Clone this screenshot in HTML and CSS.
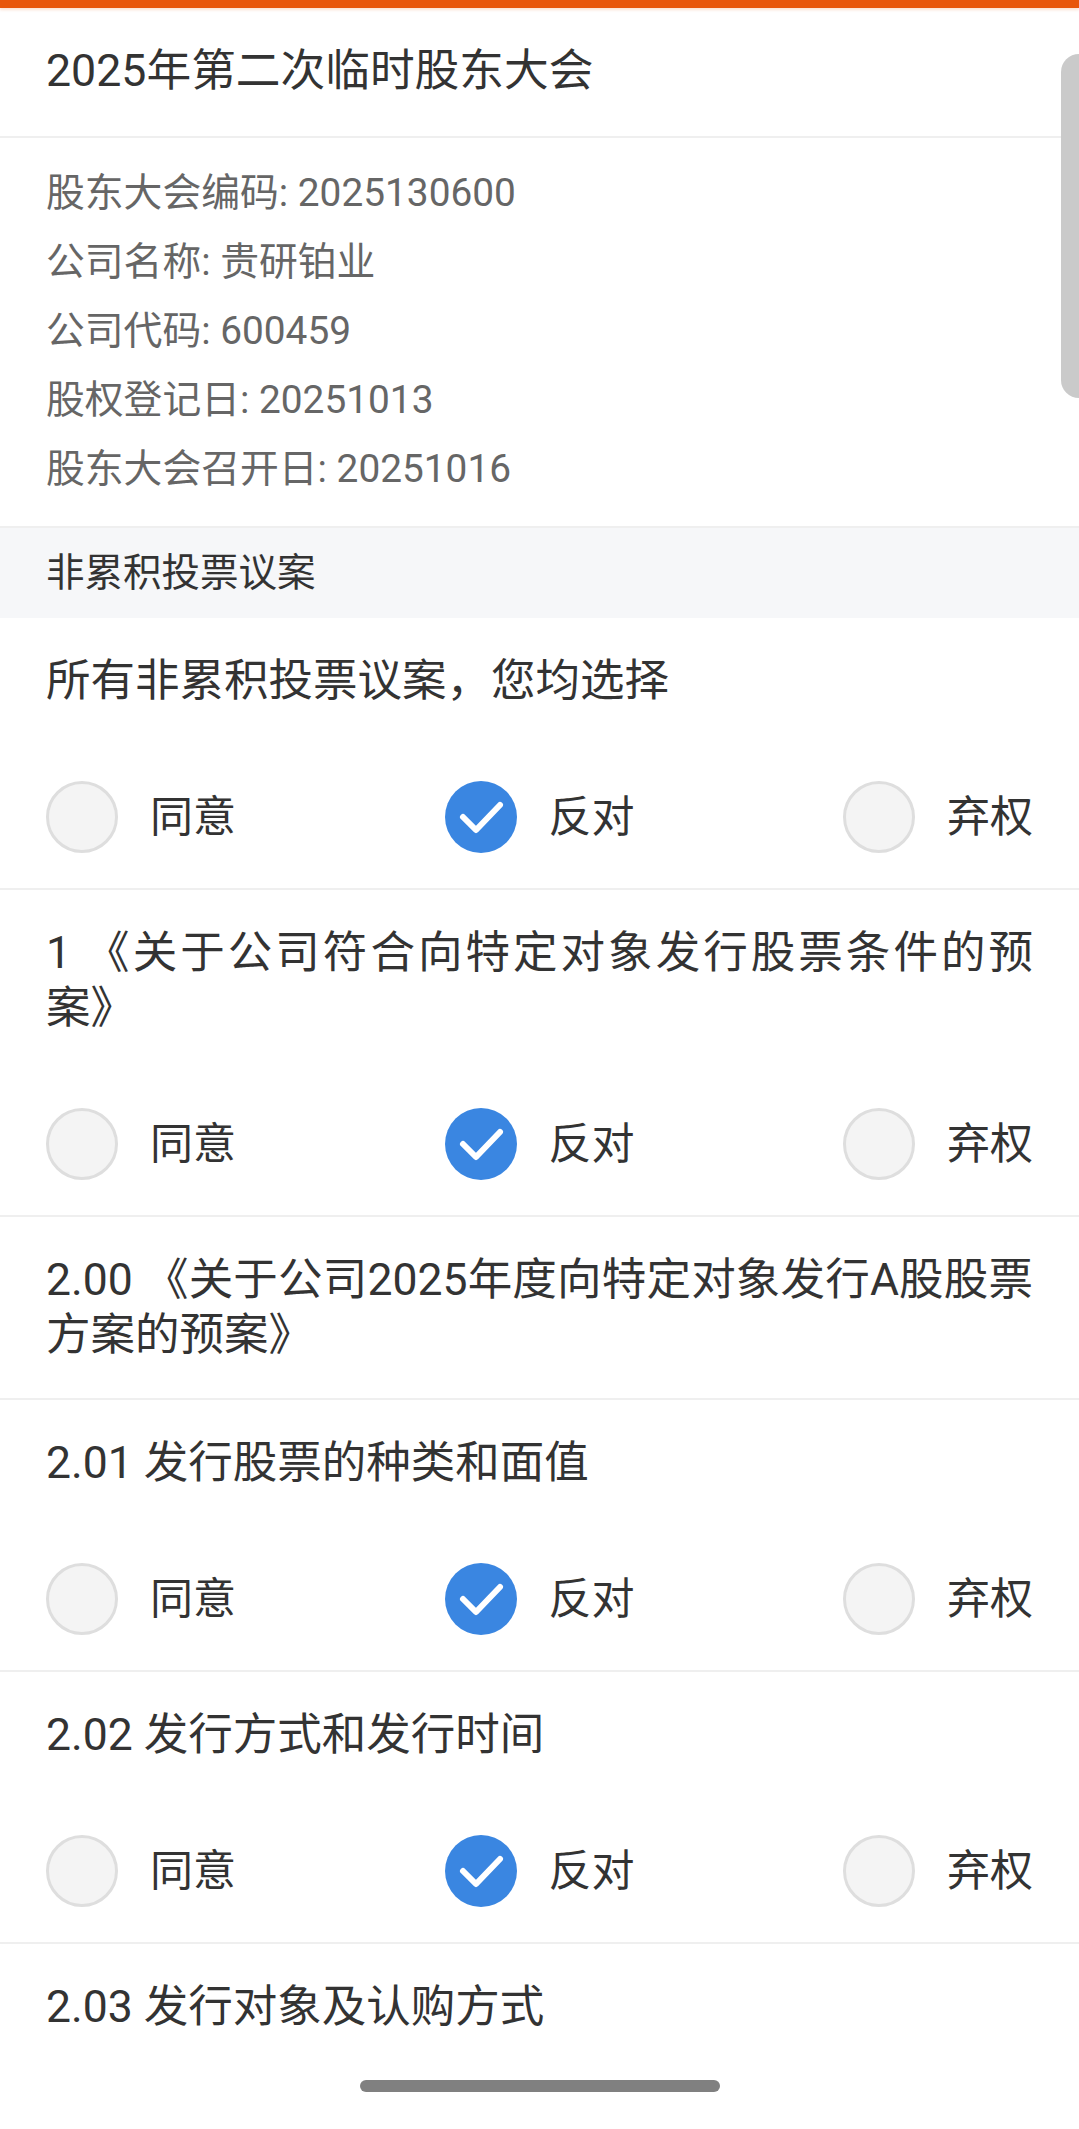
FILE: index.html
```html
<!DOCTYPE html>
<html lang="zh-CN">
<head>
<meta charset="utf-8">
<title>2025年第二次临时股东大会</title>
<link rel="stylesheet" href="styles.css">
</head>
<body>
<div class="topbar"></div>
<header class="title">2025年第二次临时股东大会</header>
<section class="info">
  <div class="info-line">股东大会编码: 2025130600</div>
  <div class="info-line">公司名称: 贵研铂业</div>
  <div class="info-line">公司代码: 600459</div>
  <div class="info-line">股权登记日: 20251013</div>
  <div class="info-line">股东大会召开日: 20251016</div>
</section>
<div class="section-head">非累积投票议案</div>

<div class="motion">
  <div class="q">所有非累积投票议案，您均选择</div>
  <div class="opts">
    <div class="opt"><span class="radio"></span><span class="opt-label">同意</span></div>
    <div class="opt"><span class="radio on"><svg viewBox="0 0 72 72"><path d="M18 36 L31 49 L55 24"/></svg></span><span class="opt-label">反对</span></div>
    <div class="opt"><span class="radio"></span><span class="opt-label">弃权</span></div>
  </div>
</div>

<div class="motion">
  <div class="q">1 《关于公司符合向特定对象发行股票条件的预案》</div>
  <div class="opts">
    <div class="opt"><span class="radio"></span><span class="opt-label">同意</span></div>
    <div class="opt"><span class="radio on"><svg viewBox="0 0 72 72"><path d="M18 36 L31 49 L55 24"/></svg></span><span class="opt-label">反对</span></div>
    <div class="opt"><span class="radio"></span><span class="opt-label">弃权</span></div>
  </div>
</div>

<div class="motion">
  <div class="q">2.00 《关于公司2025年度向特定对象发行A股股票方案的预案》</div>
</div>

<div class="motion">
  <div class="q">2.01 发行股票的种类和面值</div>
  <div class="opts">
    <div class="opt"><span class="radio"></span><span class="opt-label">同意</span></div>
    <div class="opt"><span class="radio on"><svg viewBox="0 0 72 72"><path d="M18 36 L31 49 L55 24"/></svg></span><span class="opt-label">反对</span></div>
    <div class="opt"><span class="radio"></span><span class="opt-label">弃权</span></div>
  </div>
</div>

<div class="motion">
  <div class="q">2.02 发行方式和发行时间</div>
  <div class="opts">
    <div class="opt"><span class="radio"></span><span class="opt-label">同意</span></div>
    <div class="opt"><span class="radio on"><svg viewBox="0 0 72 72"><path d="M18 36 L31 49 L55 24"/></svg></span><span class="opt-label">反对</span></div>
    <div class="opt"><span class="radio"></span><span class="opt-label">弃权</span></div>
  </div>
</div>

<div class="motion last">
  <div class="q">2.03 发行对象及认购方式</div>
</div>

<div class="scroll-thumb"></div>
<div class="navbar"><div class="home-pill"></div></div>
</body>
</html>
```

FILE: styles.css
```css
html, body {
  margin: 0;
  padding: 0;
  background: #ffffff;
}
body {
  font-family: Roboto, "Noto Sans CJK SC", "Noto Sans", sans-serif;
  color: #333333;
  text-spacing-trim: space-all;
}
.topbar {
  height: 8px;
  background: #e8560b;
  box-shadow: 0 2px 3px rgba(232, 86, 11, 0.18);
  position: relative;
  z-index: 1;
}
.title {
  font-size: 44.7px;
  line-height: 55px;
  padding: 36px 46px 37px;
  border-bottom: 2px solid #efefef;
  color: #333333;
}
.info {
  padding: 20px 46px 23px;
  border-bottom: 2px solid #efefef;
}
.info-line {
  font-size: 38.8px;
  line-height: 69px;
  color: #666666;
}
.section-head {
  height: 90px;
  line-height: 90px;
  padding: 0 46px;
  background: #f6f7f9;
  font-size: 38.5px;
  color: #333333;
}
.motion {
  padding: 36px 46px 35px;
  border-bottom: 2px solid #efefef;
}
.motion.last {
  border-bottom: none;
  padding-bottom: 120px;
}
.q {
  font-size: 44.5px;
  line-height: 55px;
  text-align: justify;
  color: #333333;
}
.opts {
  margin-top: 72px;
  display: flex;
  justify-content: space-between;
  align-items: center;
  height: 72px;
}
.opt {
  display: flex;
  align-items: center;
  gap: 32px;
}
.radio {
  width: 72px;
  height: 72px;
  box-sizing: border-box;
  border-radius: 50%;
  border: 3px solid #dedede;
  background: #f4f4f4;
  display: flex;
  align-items: center;
  justify-content: center;
}
.radio.on {
  border: none;
  background: #3a86e1;
}
.radio svg {
  width: 72px;
  height: 72px;
  display: block;
}
.radio svg path {
  fill: none;
  stroke: #ffffff;
  stroke-width: 6;
  stroke-linecap: round;
  stroke-linejoin: round;
}
.opt-label {
  font-size: 43px;
  line-height: 72px;
  color: #333333;
}
.scroll-thumb {
  position: fixed;
  top: 54px;
  right: 0;
  width: 18px;
  height: 344px;
  background: #cacaca;
  border-radius: 18px 0 0 18px;
}
.navbar {
  position: fixed;
  left: 0;
  right: 0;
  bottom: 0;
  height: 90px;
  background: #ffffff;
  display: flex;
  justify-content: center;
  padding-top: 41px;
  box-sizing: border-box;
}
.home-pill {
  width: 360px;
  height: 12px;
  border-radius: 6px;
  background: #808080;
}
```
